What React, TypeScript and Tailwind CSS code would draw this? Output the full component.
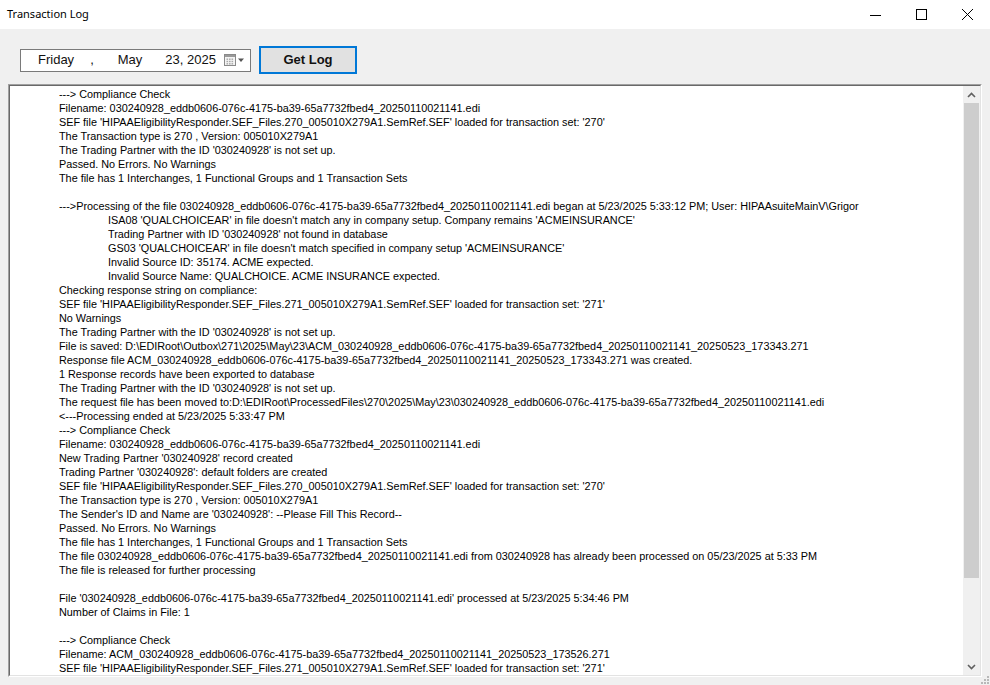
import React from "react";

type Line = { t: string; i?: number };

const lines: Line[] = [
  { t: "---> Compliance Check" },
  { t: "Filename: 030240928_eddb0606-076c-4175-ba39-65a7732fbed4_20250110021141.edi" },
  { t: "SEF file 'HIPAAEligibilityResponder.SEF_Files.270_005010X279A1.SemRef.SEF' loaded for transaction set: '270'" },
  { t: "The Transaction type is 270 , Version: 005010X279A1" },
  { t: "The Trading Partner with the ID '030240928' is not set up." },
  { t: "Passed. No Errors. No Warnings" },
  { t: "The file has 1 Interchanges, 1 Functional Groups and 1 Transaction Sets" },
  { t: "" },
  { t: "--->Processing of the file 030240928_eddb0606-076c-4175-ba39-65a7732fbed4_20250110021141.edi began at 5/23/2025 5:33:12 PM; User: HIPAAsuiteMainV\\Grigor" },
  { t: "ISA08 'QUALCHOICEAR' in file doesn't match any in company setup. Company remains 'ACMEINSURANCE'", i: 1 },
  { t: "Trading Partner with ID '030240928' not found in database", i: 1 },
  { t: "GS03 'QUALCHOICEAR' in file doesn't match specified in company setup 'ACMEINSURANCE'", i: 1 },
  { t: "Invalid Source ID: 35174. ACME expected.", i: 1 },
  { t: "Invalid Source Name: QUALCHOICE. ACME INSURANCE expected.", i: 1 },
  { t: "Checking response string on compliance:" },
  { t: "SEF file 'HIPAAEligibilityResponder.SEF_Files.271_005010X279A1.SemRef.SEF' loaded for transaction set: '271'" },
  { t: "No Warnings" },
  { t: "The Trading Partner with the ID '030240928' is not set up." },
  { t: "File is saved: D:\\EDIRoot\\Outbox\\271\\2025\\May\\23\\ACM_030240928_eddb0606-076c-4175-ba39-65a7732fbed4_20250110021141_20250523_173343.271" },
  { t: "Response file ACM_030240928_eddb0606-076c-4175-ba39-65a7732fbed4_20250110021141_20250523_173343.271 was created." },
  { t: "1 Response records have been exported to database" },
  { t: "The Trading Partner with the ID '030240928' is not set up." },
  { t: "The request file has been moved to:D:\\EDIRoot\\ProcessedFiles\\270\\2025\\May\\23\\030240928_eddb0606-076c-4175-ba39-65a7732fbed4_20250110021141.edi" },
  { t: "<---Processing ended at 5/23/2025 5:33:47 PM" },
  { t: "---> Compliance Check" },
  { t: "Filename: 030240928_eddb0606-076c-4175-ba39-65a7732fbed4_20250110021141.edi" },
  { t: "New Trading Partner '030240928' record created" },
  { t: "Trading Partner '030240928': default folders are created" },
  { t: "SEF file 'HIPAAEligibilityResponder.SEF_Files.270_005010X279A1.SemRef.SEF' loaded for transaction set: '270'" },
  { t: "The Transaction type is 270 , Version: 005010X279A1" },
  { t: "The Sender's ID and Name are '030240928': --Please Fill This Record--" },
  { t: "Passed. No Errors. No Warnings" },
  { t: "The file has 1 Interchanges, 1 Functional Groups and 1 Transaction Sets" },
  { t: "The file 030240928_eddb0606-076c-4175-ba39-65a7732fbed4_20250110021141.edi from 030240928 has already been processed on 05/23/2025 at 5:33 PM" },
  { t: "The file is released for further processing" },
  { t: "" },
  { t: "File '030240928_eddb0606-076c-4175-ba39-65a7732fbed4_20250110021141.edi' processed at 5/23/2025 5:34:46 PM" },
  { t: "Number of Claims in File: 1" },
  { t: "" },
  { t: "---> Compliance Check" },
  { t: "Filename: ACM_030240928_eddb0606-076c-4175-ba39-65a7732fbed4_20250110021141_20250523_173526.271" },
  { t: "SEF file 'HIPAAEligibilityResponder.SEF_Files.271_005010X279A1.SemRef.SEF' loaded for transaction set: '271'" },
];

function CalendarIcon() {
  return (
    <svg width="22" height="12" viewBox="0 0 22 12">
      <rect x="0.5" y="0.5" width="11" height="11" fill="#f4f4f4" stroke="#8a8a8a" />
      <rect x="1" y="1" width="10" height="2" fill="#9a9a9a" />
      {[3, 5.5, 8].map((x) =>
        [4.5, 6.8, 9.1].map((y) => (
          <rect key={`${x}-${y}`} x={x - 0.5} y={y} width="1.6" height="1.4" fill="#a8a8a8" />
        ))
      )}
      <path d="M14 4.5 L20 4.5 L17 8 Z" fill="#555" />
    </svg>
  );
}

export default function App() {
  return (
    <div
      className="relative w-[990px] h-[685px] bg-[#f0f0f0] flex flex-col overflow-hidden text-black"
      style={{ fontFamily: '"Liberation Sans", Arial, sans-serif' }}
    >
      {/* Title bar */}
      <div className="h-[29px] bg-white flex items-center shrink-0">
        <div
          className="pl-[7px] text-[11px] flex-1 text-black"
          style={{ fontFamily: '"Segoe UI", "Noto Sans", sans-serif' }}
        >
          Transaction Log
        </div>
        <div className="flex h-full">
          <div className="w-[46px] h-full flex items-center justify-center">
            <svg width="11" height="11" viewBox="0 0 11 11">
              <line x1="0" y1="6.5" x2="11" y2="6.5" stroke="#000" strokeWidth="1" />
            </svg>
          </div>
          <div className="w-[46px] h-full flex items-center justify-center">
            <svg width="11" height="11" viewBox="0 0 11 11">
              <rect x="0.5" y="0.5" width="10" height="10" fill="none" stroke="#000" strokeWidth="1" />
            </svg>
          </div>
          <div className="w-[46px] h-full flex items-center justify-center">
            <svg width="11" height="11" viewBox="0 0 11 11">
              <line x1="0" y1="0" x2="11" y2="11" stroke="#000" strokeWidth="1" />
              <line x1="11" y1="0" x2="0" y2="11" stroke="#000" strokeWidth="1" />
            </svg>
          </div>
        </div>
      </div>

      {/* Toolbar */}
      <div className="flex items-center pt-[17px] pl-[20px] shrink-0">
        <div className="w-[231px] h-[23px] border border-[#7a7a7a] bg-white flex items-center text-[13px] text-[#111]">
          <span className="ml-[17px]">Friday</span>
          <span className="ml-[16px]">,</span>
          <span className="ml-[24px]">May</span>
          <span className="ml-[23px]">23, 2025</span>
          <span className="ml-[8px] flex items-center">
            <CalendarIcon />
          </span>
        </div>
        <button className="ml-[8px] w-[98px] h-[28px] border-2 border-[#0078d7] bg-[#e1e1e1] text-[13px] font-bold text-[#111] flex items-center justify-center">
          Get Log
        </button>
      </div>

      {/* Log textbox */}
      <div className="mt-[10px] mx-[8px] flex-1 mb-[8px] border-t border-l border-[#a0a0a0] border-b-white border-r-white border-b border-r flex min-h-0">
        <div className="flex-1 border-t border-l border-[#696969] border-b border-r border-b-[#e3e3e3] border-r-[#e3e3e3] bg-white flex min-h-0 min-w-0">
          <div className="flex-1 overflow-hidden pt-[1px] pl-[49px] text-[10.85px] leading-[14px] text-black whitespace-pre min-w-0">
            {lines.map((l, idx) => (
              <div key={idx} className={l.i ? "pl-[49px] h-[14px]" : "h-[14px]"}>
                {l.t}
              </div>
            ))}
          </div>
          {/* Scrollbar */}
          <div className="w-[17px] bg-[#f0f0f0] flex flex-col shrink-0">
            <div className="h-[17px] flex items-center justify-center">
              <svg width="9" height="6" viewBox="0 0 9 6">
                <path d="M1 5 L4.5 1.5 L8 5" fill="none" stroke="#606060" strokeWidth="1.6" />
              </svg>
            </div>
            <div className="mx-[1px] h-[475px] bg-[#cdcdcd]" />
            <div className="flex-1" />
            <div className="h-[17px] flex items-center justify-center">
              <svg width="9" height="6" viewBox="0 0 9 6">
                <path d="M1 1 L4.5 4.5 L8 1" fill="none" stroke="#606060" strokeWidth="1.6" />
              </svg>
            </div>
          </div>
        </div>
      </div>

      {/* Size grip */}
      <div className="absolute right-[1px] bottom-[1px]">
        <svg width="10" height="10" viewBox="0 0 10 10">
          {[
            [8, 2],
            [5, 5],
            [8, 5],
            [2, 8],
            [5, 8],
            [8, 8],
          ].map(([x, y], k) => (
            <rect key={k} x={x} y={y} width="2" height="2" fill="#b8b8b8" />
          ))}
        </svg>
      </div>
    </div>
  );
}
